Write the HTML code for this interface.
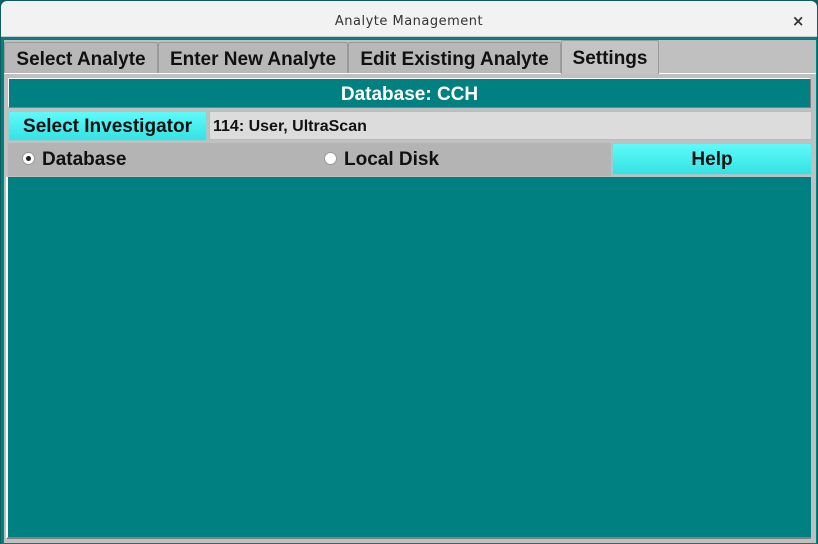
<!DOCTYPE html>
<html><head><style>
*{margin:0;padding:0;box-sizing:border-box}
body{width:818px;height:544px;background:#0d5f5f;position:relative;overflow:hidden;font-family:"Liberation Sans",sans-serif;font-weight:bold}
.a{position:absolute}
.title{left:1px;top:1px;width:816px;height:36px;background:#f2f2f2;border-radius:6px 6px 0 0;border-bottom:1px solid #ccc;font-family:"DejaVu Sans",sans-serif;font-weight:normal;font-size:13px;color:#333;text-align:center;line-height:38px;letter-spacing:0.5px}
.x{position:absolute;right:12px;top:0;font-size:15px;font-weight:bold;color:#333}
.win{left:1px;top:37px;width:816px;height:507px;background:#008080}
.tabbar{left:4px;top:40px;width:812px;height:34px;background:#c0c0c0}
.tab{top:42px;height:31px;background:#b8b8b8;border:1px solid #9a9a9a;border-bottom:none;font-size:19px;color:#111;text-align:center;line-height:34px;border-radius:2px 2px 0 0}
.pane{left:4px;top:73px;width:812px;height:470px;background:#c0c0c0;border-top:1px solid #fff}
</style></head><body>
<div class="a title" style="line-height:41px">Analyte Management<span class="x">×</span></div>
<div class="a win"></div>
<div class="a tabbar"></div>
<div class="a pane"></div>
<div class="a tab" style="left:4px;width:154px">Select Analyte</div>
<div class="a tab" style="left:158px;width:190px">Enter New Analyte</div>
<div class="a tab" style="left:348px;width:213px">Edit Existing Analyte</div>
<div class="a tab" style="left:561px;width:98px;top:40px;height:34px;background:#c4c4c4;line-height:36px">Settings</div>
<div class="a" style="left:8px;top:78px;width:803px;height:30px;background:#008080;border:1px solid;border-color:#fff #808080 #808080 #fff;color:#fff;font-size:19px;text-align:center;line-height:31px">Database: CCH</div>
<div class="a" style="left:8px;top:111px;width:199px;height:30px;background:linear-gradient(#5ffafa,#36e2e2);border:1px solid #9cc;border-radius:2px;font-size:19px;text-align:center;line-height:30px;color:#111">Select Investigator</div>
<div class="a" style="left:209px;top:111px;width:603px;height:29px;background:#dcdcdc;border:1px solid #bbb;font-size:16px;line-height:29px;padding-left:3px;color:#111">114: User, UltraScan</div>
<div class="a" style="left:8px;top:143px;width:603px;height:33px;background:#b4b4b4"></div>
<div class="a" style="left:22px;top:152px;width:13px;height:13px;border-radius:50%;background:#fff;border:1px solid #999"><div style="position:absolute;left:3px;top:3px;width:5px;height:5px;border-radius:50%;background:#222"></div></div>
<div class="a" style="left:42px;top:148px;font-size:19px;line-height:24px;color:#111">Database</div>
<div class="a" style="left:324px;top:152px;width:13px;height:13px;border-radius:50%;background:#fff;border:1px solid #999"></div>
<div class="a" style="left:344px;top:148px;font-size:19px;line-height:24px;color:#111">Local Disk</div>
<div class="a" style="left:612px;top:143px;width:200px;height:32px;background:linear-gradient(#5ffafa,#36e2e2);border:1px solid #9cc;border-radius:2px;font-size:19px;text-align:center;line-height:32px;color:#111">Help</div>
<div class="a" style="left:6px;top:177px;width:805px;height:362px;background:#008080;border-left:2px solid #fff;border-bottom:2px solid #808080"></div>
</body></html>
